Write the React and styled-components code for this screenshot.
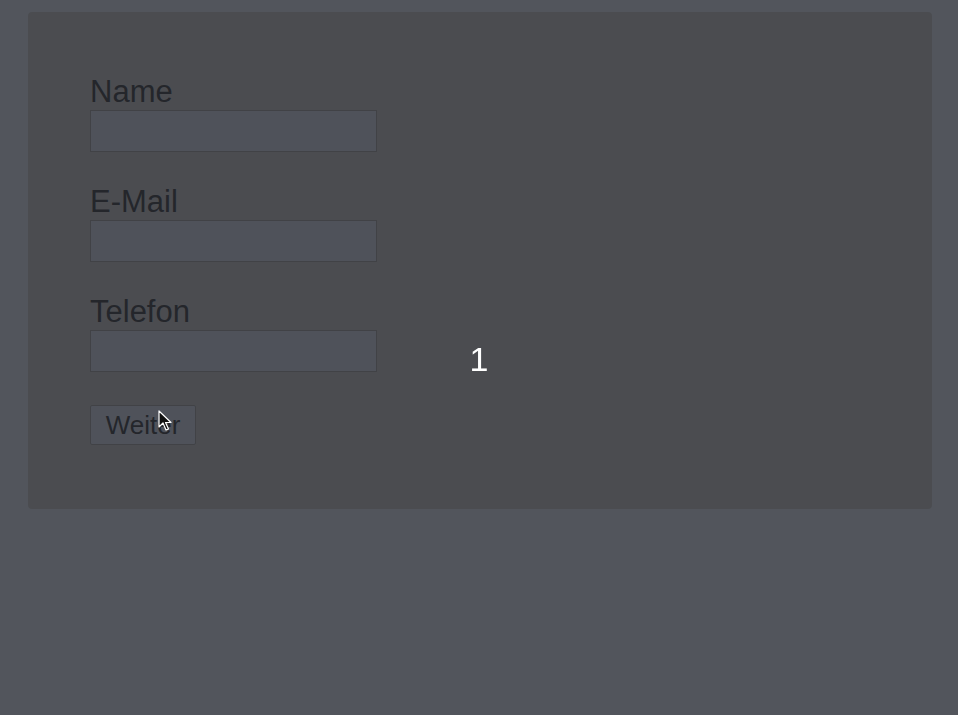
import React, { useState } from 'react';
import styled, { createGlobalStyle } from 'styled-components';

const GlobalStyle = createGlobalStyle`
  html, body {
    margin: 0;
    padding: 0;
    background: #e2e8f8;
    font-family: "Liberation Sans", Arial, sans-serif;
  }
`;

const App = () => {
  const [name, setName] = useState('');
  const [email, setEmail] = useState('');
  const [phone, setPhone] = useState('');

  return (
    <>
      <GlobalStyle />
      <Page>
        <Card>
          <Field>
            <Label>Name</Label>
            <Input value={name} onChange={(e) => setName(e.target.value)} />
          </Field>
          <Field>
            <Label>E-Mail</Label>
            <Input value={email} onChange={(e) => setEmail(e.target.value)} />
          </Field>
          <Field>
            <Label>Telefon</Label>
            <Input value={phone} onChange={(e) => setPhone(e.target.value)} />
          </Field>
          <ButtonArea>
            <NextButton>Weiter</NextButton>
          </ButtonArea>
        </Card>
      </Page>
      <Overlay>
        <Countdown>1</Countdown>
      </Overlay>
      <Cursor width="14" height="22" viewBox="0 0 14 22">
        <path
          d="M1 1 L1 17 L5 13 L8 20 L10.5 19 L7.5 12.5 L13 12.5 Z"
          fill="#111"
          stroke="#fff"
          strokeWidth="1.2"
          strokeLinejoin="round"
        />
      </Cursor>
    </>
  );
};

const Page = styled.div`
  min-height: 100vh;
  padding: 12px 26px 0 28px;
  box-sizing: border-box;
`;

const Card = styled.div`
  display: flex;
  flex-direction: column;
  gap: 32px;
  background: #c6c4c8;
  border-radius: 4px;
  padding: 62px 62px 64px;
`;

const Field = styled.div`
  display: flex;
  flex-direction: column;
`;

const Label = styled.label`
  font-size: 31px;
  line-height: 36px;
  color: #2c2c34;
`;

const Input = styled.input`
  width: 287px;
  height: 42px;
  box-sizing: border-box;
  background: #d6dcf0;
  border: 1px solid #9e9ca0;
  outline: none;
  font-size: 18px;
`;

const ButtonArea = styled.div`
  display: flex;
  margin-top: 1px;
`;

const NextButton = styled.button`
  width: 106px;
  height: 40px;
  padding: 0;
  background: #d6dcf0;
  border: 1px solid #9e9ca0;
  border-radius: 2px;
  font-family: "Liberation Sans", Arial, sans-serif;
  font-size: 26px;
  color: #2c2c34;
`;

const Overlay = styled.div`
  position: fixed;
  inset: 0;
  display: flex;
  align-items: center;
  justify-content: center;
  background: rgba(34, 36, 40, 0.75);
`;

const Countdown = styled.div`
  font-size: 34px;
  color: #ffffff;
  padding-top: 4px;
`;

const Cursor = styled.svg`
  position: fixed;
  left: 158px;
  top: 410px;
`;

export default App;
